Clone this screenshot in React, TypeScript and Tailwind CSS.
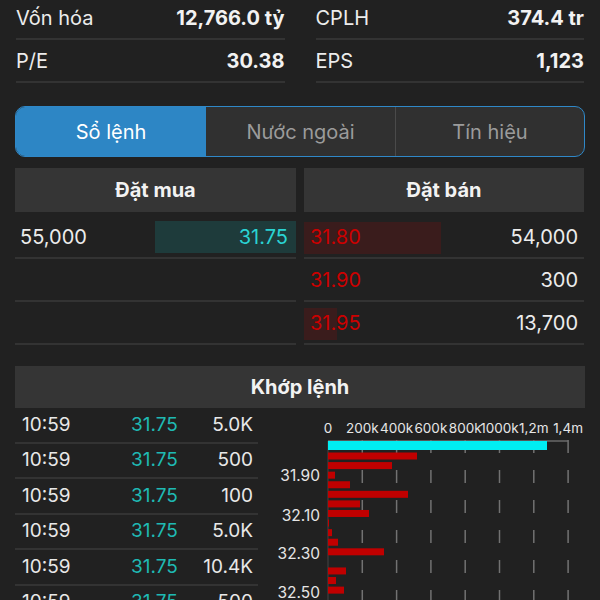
const trades = [
  { time: "10:59", price: "31.75", vol: "5.0K" },
  { time: "10:59", price: "31.75", vol: "500" },
  { time: "10:59", price: "31.75", vol: "100" },
  { time: "10:59", price: "31.75", vol: "5.0K" },
  { time: "10:59", price: "31.75", vol: "10.4K" },
  { time: "10:59", price: "31.75", vol: "500" },
];

// right edge (page x) of each red bar, one per price row after the cyan one
const redBars = [417, 392, 335, 350, 408, 360, 369, 329, 332, 338, 384, 0, 346, 336, 344];
const axisLabels = ["0", "200k", "400k", "600k", "800k", "1000k", "1,2m", "1,4m"];
const priceLabels = [
  { text: "31.90", y: 475 },
  { text: "32.10", y: 515 },
  { text: "32.30", y: 553 },
  { text: "32.50", y: 592 },
];

function StatRow({ label, value }: { label: string; value: string }) {
  return (
    <div className="flex h-[43px] items-center justify-between border-b-2 border-[#333]">
      <span className="text-[20px] text-[#ececec]">{label}</span>
      <span className="text-[20px] font-bold text-[#f2f2f2]">{value}</span>
    </div>
  );
}

function VolumeChart() {
  const x0 = 328;
  const step = 34.3;
  return (
    <svg width="342" height="192" className="block">
      <g transform="translate(-258,-408)">
        {axisLabels.map((l, i) => (
          <text
            key={l}
            x={x0 + step * i}
            y={433}
            textAnchor="middle"
            fontSize="13.5"
            fill="#e6e6e6"
            fontFamily="Inter, sans-serif"
          >
            {l}
          </text>
        ))}
        <line x1={x0} y1={441} x2={568} y2={441} stroke="#6a6a6a" strokeWidth="1.5" />
        {axisLabels.slice(1).map((_, i) => (
          <line
            key={i}
            x1={x0 + step * (i + 1)}
            y1={440}
            x2={x0 + step * (i + 1)}
            y2={600}
            stroke="#727272"
            strokeWidth="1.5"
            strokeDasharray="13 17"
          />
        ))}
        <line x1={x0} y1={441} x2={x0} y2={600} stroke="#444" strokeWidth="1" />
        <rect x={x0} y={441} width={547 - x0} height={9} fill="#00eef2" />
        {redBars.map((r, i) =>
          r > x0 ? (
            <rect key={i} x={x0} y={452.5 + 9.58 * i} width={r - x0} height={7} fill="#c00000" />
          ) : null
        )}
        {priceLabels.map((p) => (
          <text
            key={p.text}
            x={320}
            y={p.y + 5.5}
            textAnchor="end"
            fontSize="15.5"
            fill="#e6e6e6"
            fontFamily="Inter, sans-serif"
          >
            {p.text}
          </text>
        ))}
      </g>
    </svg>
  );
}

export default function App() {
  return (
    <div className="h-[600px] w-[600px] overflow-hidden bg-[#212121] font-['Inter','Liberation_Sans',sans-serif] text-[#ececec]">
      {/* key figures */}
      <div className="-mt-[3px] grid grid-cols-2 gap-x-[31px] pl-[16px] pr-[16px]">
        <div>
          <StatRow label="Vốn hóa" value="12,766.0 tỷ" />
          <StatRow label="P/E" value="30.38" />
        </div>
        <div>
          <StatRow label="CPLH" value="374.4 tr" />
          <StatRow label="EPS" value="1,123" />
        </div>
      </div>

      {/* tabs */}
      <div className="mx-[15px] mt-[23px] flex h-[51px] overflow-hidden rounded-[10px] border-[1.5px] border-[#2f88c8] bg-[#303030] text-[20px]">
        <div className="flex w-[190px] items-center justify-center bg-[#2d86c5] text-white">Sổ lệnh</div>
        <div className="flex w-[190px] items-center justify-center border-r border-[#4a4a4a] text-[#9b9b9b]">
          Nước ngoài
        </div>
        <div className="flex flex-1 items-center justify-center text-[#9b9b9b]">Tín hiệu</div>
      </div>

      {/* order book */}
      <div className="mx-[15px] mt-[11px] flex gap-[8px]">
        <div className="w-[281px]">
          <div className="flex h-[44px] items-center justify-center bg-[#353535] text-[20px] font-bold text-[#f2f2f2]">
            Đặt mua
          </div>
          <div className="mt-[4px] flex h-[43px] items-center justify-between border-b-2 border-[#333] pl-[5px]">
            <span className="text-[20px] text-[#ececec]">55,000</span>
            <span className="flex h-[32px] w-[141px] items-center justify-end bg-[#1e3b3b] pr-[8px] text-[20px] text-[#2ad3d3]">
              31.75
            </span>
          </div>
          <div className="h-[43px] border-b-2 border-[#333]" />
          <div className="h-[43px] border-b-2 border-[#333]" />
        </div>
        <div className="w-[280px]">
          <div className="flex h-[44px] items-center justify-center bg-[#353535] text-[20px] font-bold text-[#f2f2f2]">
            Đặt bán
          </div>
          <div className="relative mt-[4px] flex h-[43px] items-center justify-between border-b-2 border-[#333] pr-[6px]">
            <span className="absolute left-0 top-[6px] h-[32px] w-[137px] bg-[#3a1c1c]" />
            <span className="relative pl-[6px] text-[20px] text-[#cc0000]">31.80</span>
            <span className="relative text-[20px] text-[#ececec]">54,000</span>
          </div>
          <div className="flex h-[43px] items-center justify-between border-b-2 border-[#333] pr-[6px]">
            <span className="pl-[6px] text-[20px] text-[#cc0000]">31.90</span>
            <span className="text-[20px] text-[#ececec]">300</span>
          </div>
          <div className="relative flex h-[43px] items-center justify-between border-b-2 border-[#333] pr-[6px]">
            <span className="absolute left-0 top-[6px] h-[32px] w-[33px] bg-[#3a1c1c]" />
            <span className="relative pl-[6px] text-[20px] text-[#cc0000]">31.95</span>
            <span className="text-[20px] text-[#ececec]">13,700</span>
          </div>
        </div>
      </div>

      {/* matched orders */}
      <div className="mx-[15px] mt-[21px] flex h-[42px] items-center justify-center bg-[#353535] text-[20px] font-bold text-[#f2f2f2]">
        Khớp lệnh
      </div>
      <div className="flex">
        <div className="ml-[15px] w-[243px]">
          {trades.map((t, i) => (
            <div
              key={i}
              className="flex h-[35.5px] items-center border-b-2 border-[#333] text-[19px]"
            >
              <span className="w-[116px] pl-[7px] text-[#e8e8e8]">{t.time}</span>
              <span className="w-[62px] text-[#1fb9b3]">{t.price}</span>
              <span className="flex-1 pr-[5px] text-right text-[#e8e8e8]">{t.vol}</span>
            </div>
          ))}
        </div>
        <VolumeChart />
      </div>
    </div>
  );
}
